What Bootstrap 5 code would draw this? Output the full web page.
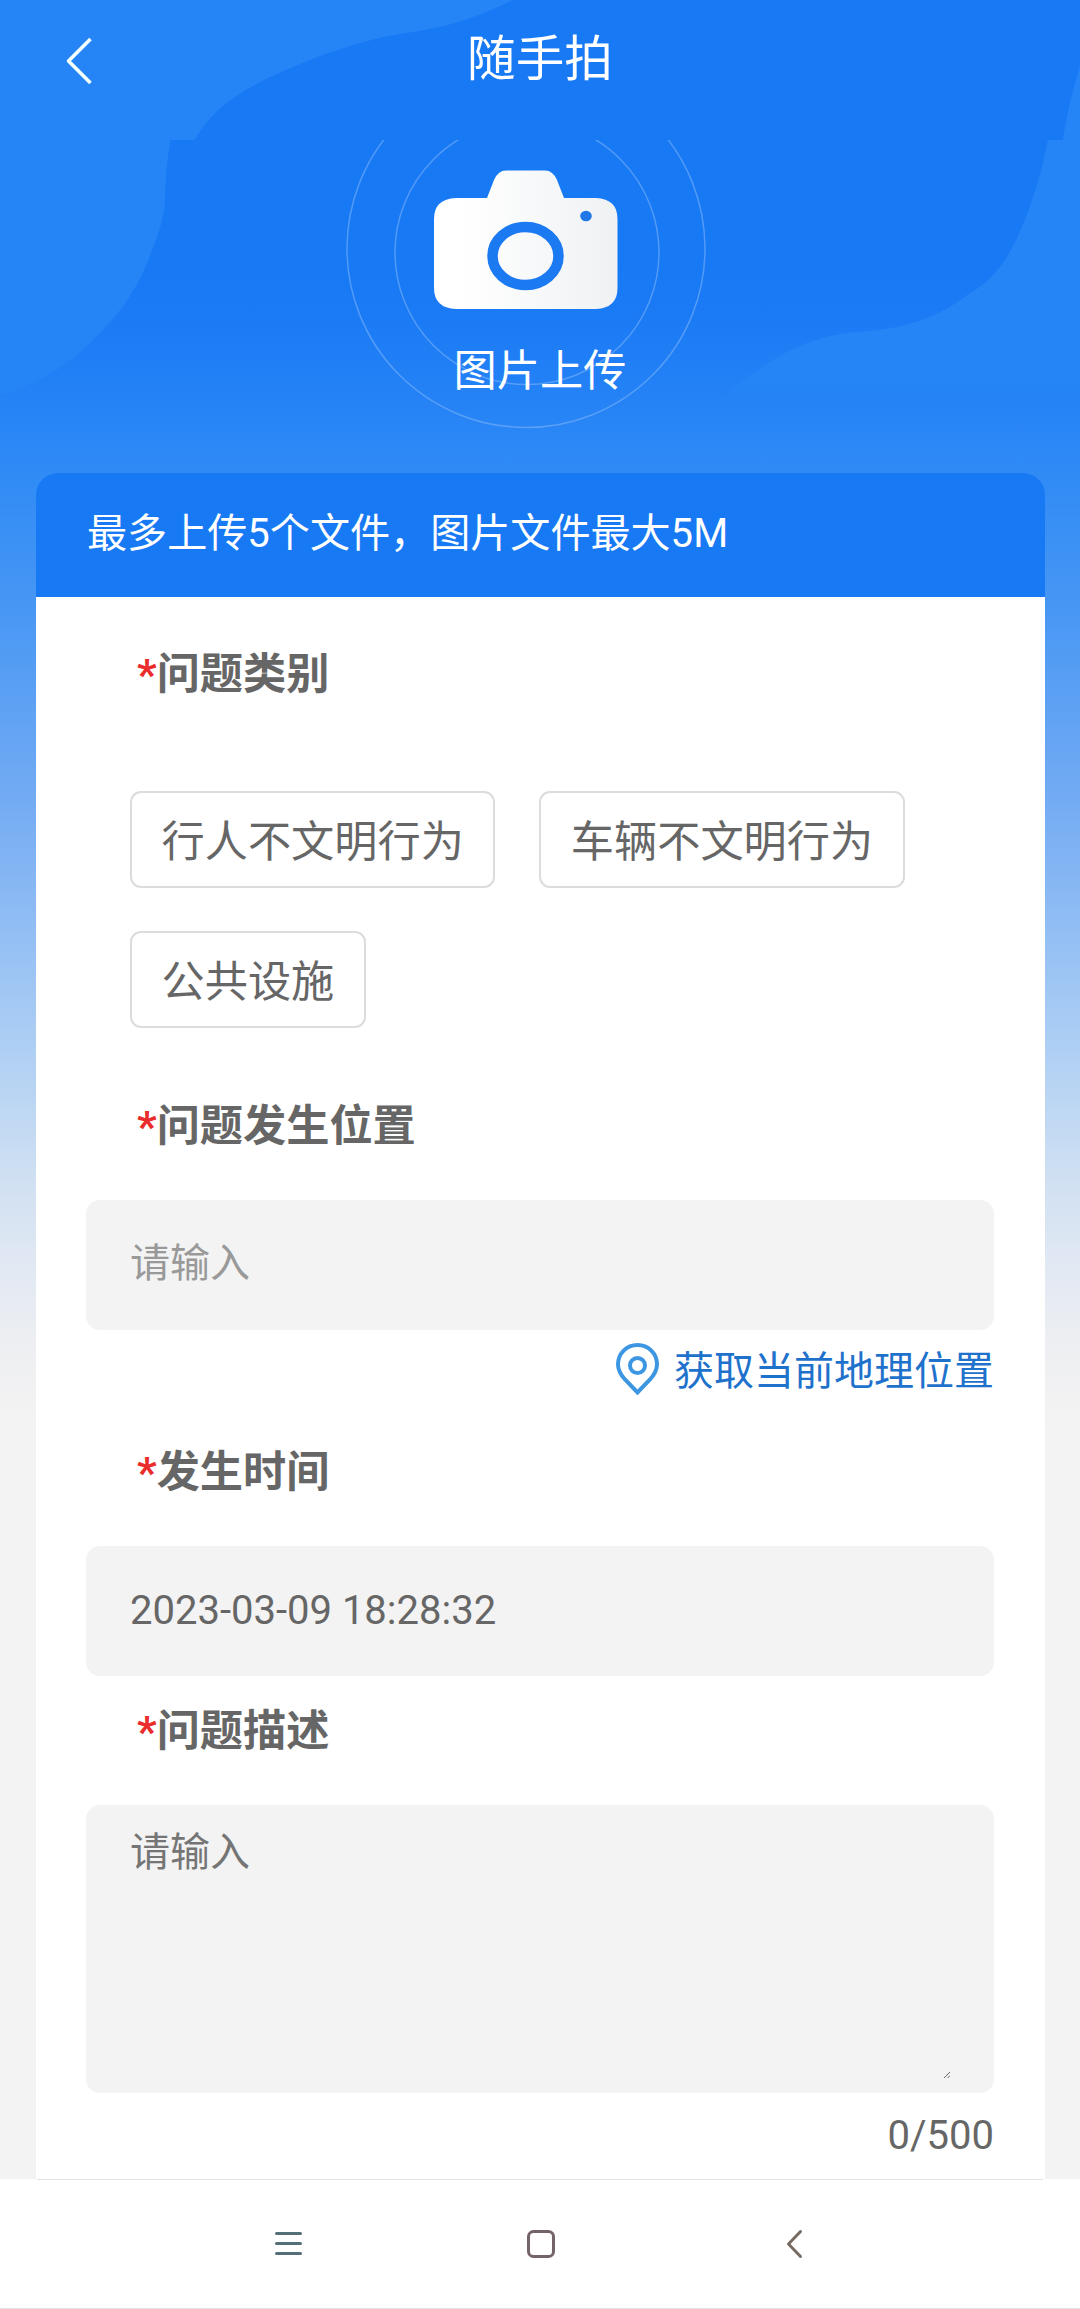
<!DOCTYPE html>
<html lang="zh-CN">
<head>
<meta charset="utf-8">
<meta name="viewport" content="width=device-width, initial-scale=1">
<title>随手拍</title>
<link href="https://cdn.jsdelivr.net/npm/bootstrap@5.3.0/dist/css/bootstrap.min.css" rel="stylesheet">
<style>
  body { font-family: Roboto, "Noto Sans CJK SC", sans-serif; font-size: 40px; line-height: 60px; color: #666; background: #fff; }
  .screen { width: 1080px; height: 2309px; }
  .page-area { height: 2179px; background: linear-gradient(180deg, #1879f5 0, #1879f5 270px, #1b7bf5 320px, #2482f6 395px, #308bf5 473px, #4696f4 600px, #73abf3 800px, #accef4 1040px, #d0e0f2 1180px, #e2e9f3 1270px, #eeeff2 1350px, #f3f3f3 1420px); }
  .app-bar { height: 140px; padding-bottom: 21px; background: #1879f5; }
  .app-title { font-size: 48.6px; line-height: 70px; }
  .back-link { left: 63px; top: 36px; line-height: 0; }
  .hero { height: 333px; }
  .hero-text { font-size: 43.2px; line-height: 60px; padding-top: 33px; }
  .camera { margin: 30px 0 0 434px; }
  .panel { width: 1009px; margin-left: 36px; }
  .panel-tip { height: 124px; padding: 31px 50px 0 51px; background: #1879f5; border-radius: 22px 22px 0 0; font-size: 40.1px; }
  .panel-main { padding: 0 51px 0 50px; height: 1582px; }
  .field-label { font-size: 43.2px; line-height: 60px; padding-left: 51px; font-weight: 700; }
  .req { color: #ea2c2c; }
  .lab-a { margin-top: 48px; }
  .lab-b { margin-top: 69px; }
  .lab-c { margin-top: 43px; }
  .lab-d { margin-top: 26px; }
  .choices { padding: 86px 44px 0; column-gap: 44px; row-gap: 43px; }
  .choice { --bs-btn-color: #666; --bs-btn-border-color: #dcdcdc; --bs-btn-bg: #fff; --bs-btn-padding-x: 29.5px; --bs-btn-padding-y: 0; font-size: 43.2px; line-height: 60px; height: 97px; border-width: 2px; border-radius: 11px; padding-top: 6px; }
  .field { background: #f3f3f3; border: 0; border-radius: 14px; font-size: 40px; line-height: 60px; color: #666; padding: 0 44px; height: 130px; }
  .field:focus { background: #f3f3f3; box-shadow: none; }
  .field::placeholder { color: #999; opacity: 1; }
  .field-area { height: 288px; padding: 18px 44px; resize: none; }
  .field-area::placeholder { color: #757575; }
  .field-loc { padding-bottom: 3px; }
  .field-time { padding-bottom: 2px; }
  .gap-field { margin-top: 43px; }
  .locate { color: #1f72cc; line-height: 60px; padding-top: 14px; height: 70px; gap: 15px; }
  .locate-pin { margin-bottom: 7px; }
  .grip { right: 44px; bottom: 15px; line-height: 0; }
  .counter { margin-top: 13px; }
  .sys-nav { height: 130px; border-bottom: 1px solid #e3e3e3; }
  .sys-nav .rule { height: 1px; background: #e3e3e3; margin: 0 37px; }
  svg { display: block; }
</style>
</head>
<body>
<div class="screen overflow-hidden d-flex flex-column">
  <div class="page-area flex-shrink-0">
    <header class="app-bar position-relative d-flex align-items-center justify-content-center text-white">
      <svg class="position-absolute top-0 start-0" width="1080" height="140" aria-hidden="true">
        <path fill="#2584f6" d="M0 0H513C490 11 470 19 448 25C425 31 402 33 379 38C355 44 332 51 310 60C285 70 262 80 241 93C219 107 205 122 194.500 140H0Z"/>
        <path fill="#2584f6" d="M1080 66C1073 90 1066 115 1063 140H1080Z"/>
      </svg>
      <a class="back-link position-absolute" href="#" aria-label="返回">
        <svg width="30" height="50" fill="none" stroke="#f4ffff" stroke-width="3.600" stroke-linejoin="round"><path d="M27.500 3L5.500 25L27.500 47"/></svg>
      </a>
      <h1 class="app-title fw-normal m-0 position-relative">随手拍</h1>
    </header>

    <section class="hero position-relative text-white text-center">
      <svg class="position-absolute top-0 start-0" width="1080" height="333" viewBox="0 140 1080 333" aria-hidden="true">
        <defs>
          <linearGradient id="fadeBlob" gradientUnits="userSpaceOnUse" x1="0" y1="340" x2="0" y2="420">
            <stop offset="0" stop-color="#2584f6"/><stop offset=".5" stop-color="#2584f6"/><stop offset="1" stop-color="#2584f6" stop-opacity="0"/>
          </linearGradient>
        </defs>
        <path fill="#2584f6" d="M0 140H170.500C167 160 165 180 165 200C164 218 158 236 151 253C142 279 125 308 103 330C80 356 42 385 0 395Z"/>
        <path fill="url(#fadeBlob)" d="M1048 140C1040 180 1029 215 1012 248C1000 270 987 284 970 293C945 312 915 329 857 332C815 335 785 352 764 366C740 381 720 398 705 420H1080V140Z"/>
        <g fill="none" stroke="#8cbcfa" stroke-opacity=".5" stroke-width="1.500">
          <circle cx="526" cy="248.500" r="179"/>
          <circle cx="527" cy="252.500" r="132"/>
        </g>
      </svg>
      <div class="position-relative d-flex">
        <svg class="camera" width="184" height="139" viewBox="434 170 184 139" aria-hidden="true">
          <defs><linearGradient id="camFill"><stop offset=".15" stop-color="#fff"/><stop offset="1" stop-color="#eff1f3"/></linearGradient></defs>
          <path fill="url(#camFill)" d="M456 198H487L494 180Q498 170.500 506 170.500H545Q553 170.500 557 180L564 198H596Q617.500 199 617.500 219V288Q617.500 308 596 309H456Q434 308 434 288V219Q434 199 456 198Z"/>
          <ellipse cx="525.500" cy="256" rx="33" ry="29" fill="none" stroke="#1b7af2" stroke-width="10.500"/>
          <ellipse cx="586" cy="216" rx="5.800" ry="5.200" fill="#1f78e6"/>
        </svg>
      </div>
      <div class="hero-text position-relative">图片上传</div>
    </section>

    <main class="panel">
      <div class="panel-tip text-white">最多上传5个文件，图片文件最大5M</div>
      <form class="panel-main bg-white d-flex flex-column">
        <div class="field-label lab-a"><span class="req">*</span>问题类别</div>
        <div class="choices d-flex flex-wrap">
          <button type="button" class="btn choice">行人不文明行为</button>
          <button type="button" class="btn choice">车辆不文明行为</button>
          <button type="button" class="btn choice">公共设施</button>
        </div>

        <label class="field-label lab-b" for="place"><span class="req">*</span>问题发生位置</label>
        <input id="place" class="form-control field field-loc gap-field" type="text" placeholder="请输入">
        <div class="locate d-flex justify-content-end align-items-center">
          <svg class="locate-pin" width="43" height="52" viewBox="0 0 43 52" fill="none" stroke="#3d96e2" stroke-width="4" aria-hidden="true">
            <path d="M21.500 2C10.500 2 2 10.500 2 21.500C2 28 5 32 9 36.500L21.500 49.500L34 36.500C38 32 41 28 41 21.500C41 10.500 32.500 2 21.500 2Z"/>
            <circle cx="21.500" cy="22.500" r="7.500"/>
          </svg>
          <span>获取当前地理位置</span>
        </div>

        <label class="field-label lab-c" for="time"><span class="req">*</span>发生时间</label>
        <input id="time" class="form-control field field-time gap-field" type="text" value="2023-03-09 18:28:32">

        <label class="field-label lab-d" for="desc"><span class="req">*</span>问题描述</label>
        <div class="position-relative gap-field">
          <textarea id="desc" class="form-control field field-area" placeholder="请输入"></textarea>
          <span class="grip position-absolute"><svg width="6" height="6" stroke="#666" stroke-width="1"><path d="M0 6L6 0M3.500 6L6 3.500"/></svg></span>
        </div>
        <div class="counter text-end">0/500</div>
      </form>
    </main>
  </div>

  <nav class="sys-nav bg-white flex-shrink-0">
    <div class="rule"></div>
    <svg width="1080" height="128" viewBox="0 2180 1080 128" fill="none" stroke-width="3" stroke-linecap="round" stroke-linejoin="round" aria-hidden="true">
      <path stroke="#556f78" d="M276.500 2233.500H300.500M276.500 2243.500H300.500M276.500 2253.500H300.500"/>
      <rect stroke="#75636a" x="528.500" y="2231.500" width="25" height="25" rx="5"/>
      <path stroke="#786c62" d="M800.500 2231.500L788.500 2244L800.500 2256.500"/>
    </svg>
  </nav>
</div>
<script src="https://cdn.jsdelivr.net/npm/bootstrap@5.3.0/dist/js/bootstrap.bundle.min.js"></script>
</body>
</html>
